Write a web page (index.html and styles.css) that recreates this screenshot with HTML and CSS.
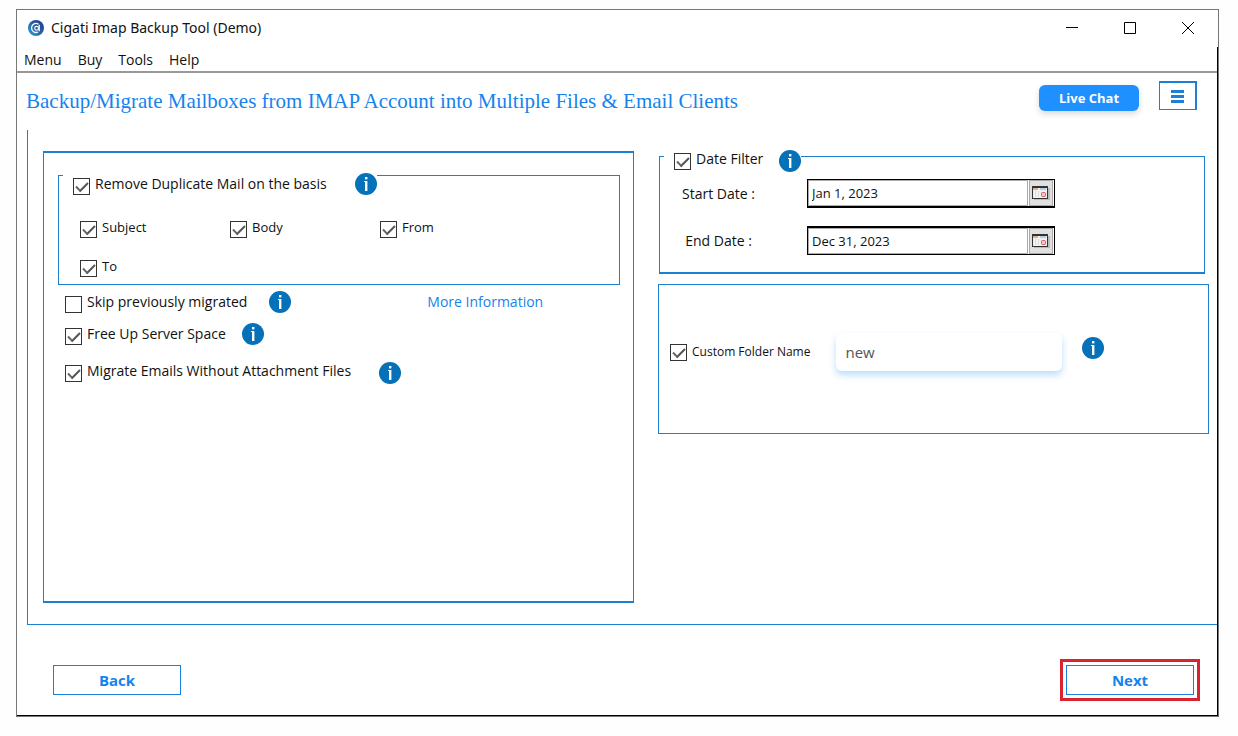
FILE: index.html
```html
<!DOCTYPE html>
<html lang="en">
<head>
    <meta charset="UTF-8">
    <meta name="viewport" content="width=device-width, initial-scale=1.0">
    <title>Cigati Imap Backup Tool (Demo)</title>
    <link rel="stylesheet" href="styles.css">
</head>
<body>
    <!-- Shared icons -->
    <svg class="sprite" aria-hidden="true">
        <symbol id="info" viewBox="0 0 22 22">
            <circle cx="11" cy="11" r="11" fill="#0571b8"/>
            <rect x="10" y="4" width="2.400" height="2.400" fill="#fff"/>
            <path d="M9 8h3.400v10H10V9H9z" fill="#fff"/>
        </symbol>
        <symbol id="calendar" viewBox="0 0 18 14">
            <rect x="2" y="2" width="16" height="12" fill="#bbb"/>
            <rect x="0" y="0" width="16" height="13" fill="#333"/>
            <rect x="1" y="2" width="14" height="10" fill="#f4f0f0"/>
            <rect x="1" y="2" width="5" height="2" fill="#d9b878"/>
            <rect x="8" y="2" width="6" height="2" fill="#b5cfe6"/>
            <path d="M3.500 5v6M6.500 5v6" stroke="#ddd"/>
            <rect x="9.500" y="6.500" width="4" height="4" rx="1" fill="#f5c9c9" stroke="#cf5c5c"/>
        </symbol>
    </svg>

    <div class="window">
        <div class="titlebar">
            <svg class="logo" viewBox="0 0 16 16" aria-hidden="true">
                <defs>
                    <linearGradient id="logo-fill" x1="0" y1="1" x2="1" y2="0">
                        <stop offset="0" stop-color="#2aa5d8"/>
                        <stop offset="0.6" stop-color="#26579f"/>
                        <stop offset="1" stop-color="#2b3580"/>
                    </linearGradient>
                </defs>
                <circle cx="8" cy="8" r="8" fill="url(#logo-fill)"/>
                <path d="M10.500 4.200A4.500 4.500 0 1 0 10 12" fill="none" stroke="#fff" stroke-width="1.300"/>
                <circle cx="8.600" cy="8.300" r="1.900" fill="none" stroke="#fff" stroke-width="1.100"/>
                <path d="M11.200 4.800v6.400" fill="none" stroke="#fff" stroke-width="1.300"/>
            </svg>
            <span class="app-name">Cigati Imap Backup Tool (Demo)</span>
            <div class="window-controls">
                <button type="button" aria-label="Minimize">
                    <svg viewBox="0 0 12 12"><path d="M0 5.500h12"/></svg>
                </button>
                <button type="button" aria-label="Maximize">
                    <svg viewBox="0 0 12 12"><path d="M.5.5h11v11H.5z"/></svg>
                </button>
                <button type="button" aria-label="Close">
                    <svg viewBox="0 0 12 12"><path d="M0 0l12 12M12 0L0 12"/></svg>
                </button>
            </div>
        </div>

        <div class="content">
            <nav class="menubar">
                <button type="button">Menu</button>
                <button type="button">Buy</button>
                <button type="button">Tools</button>
                <button type="button">Help</button>
            </nav>

            <header class="header">
                <h1>Backup/Migrate Mailboxes from IMAP Account into Multiple Files &amp; Email Clients</h1>
                <button type="button" class="live-chat">Live Chat</button>
                <button type="button" class="burger" aria-label="Options">
                    <svg viewBox="0 0 13 13"><path d="M0 1.500h13M0 6.500h13M0 11.500h13"/></svg>
                </button>
            </header>

            <main class="panel">
                <section class="mail-options">
                    <fieldset class="duplicates">
                        <legend>
                            <label class="check"><input type="checkbox" checked><span>Remove Duplicate Mail on the basis</span></label>
                            <svg class="info"><use href="#info"/></svg>
                        </legend>
                        <div class="basis">
                            <label class="check"><input type="checkbox" checked><span>Subject</span></label>
                            <label class="check"><input type="checkbox" checked><span>Body</span></label>
                            <label class="check"><input type="checkbox" checked><span>From</span></label>
                            <label class="check"><input type="checkbox" checked><span>To</span></label>
                        </div>
                    </fieldset>
                    <div class="option skip">
                        <label class="check"><input type="checkbox"><span>Skip previously migrated</span></label>
                        <svg class="info"><use href="#info"/></svg>
                        <a href="#" class="more">More Information</a>
                    </div>
                    <div class="option free">
                        <label class="check"><input type="checkbox" checked><span>Free Up Server Space</span></label>
                        <svg class="info"><use href="#info"/></svg>
                    </div>
                    <div class="option migrate">
                        <label class="check"><input type="checkbox" checked><span>Migrate Emails Without Attachment Files</span></label>
                        <svg class="info"><use href="#info"/></svg>
                    </div>
                </section>

                <section class="filters">
                    <fieldset class="dates">
                        <legend>
                            <label class="check"><input type="checkbox" checked><span>Date Filter</span></label>
                            <svg class="info"><use href="#info"/></svg>
                        </legend>
                        <div class="date-row">
                            <label for="start-date">Start Date :</label>
                            <div class="date-field start">
                                <input type="text" id="start-date" value="Jan 1, 2023">
                                <button type="button" aria-label="Pick start date"><svg><use href="#calendar"/></svg></button>
                            </div>
                        </div>
                        <div class="date-row">
                            <label for="end-date">End Date :</label>
                            <div class="date-field end">
                                <input type="text" id="end-date" value="Dec 31, 2023">
                                <button type="button" aria-label="Pick end date"><svg><use href="#calendar"/></svg></button>
                            </div>
                        </div>
                    </fieldset>

                    <div class="folder">
                        <label class="check"><input type="checkbox" checked><span>Custom Folder Name</span></label>
                        <input type="text" class="folder-name" value="new" aria-label="Custom folder name">
                        <svg class="info"><use href="#info"/></svg>
                    </div>
                </section>
            </main>

            <footer class="actions">
                <button type="button" class="btn">Back</button>
                <div class="highlight">
                    <button type="button" class="btn">Next</button>
                </div>
            </footer>
        </div>
    </div>
</body>
</html>
```
FILE: styles.css
```css
* {
    box-sizing: border-box;
}

body {
    display: flex;
    min-height: 100vh;
    margin: 0;
    padding: 9px 19px 19px 16px;
    background-color: #fefefe;
    color: #111;
    font-family: "Open Sans", "Noto Sans", sans-serif;
    font-size: 14px;
    line-height: 18px;
}

button, input {
    font-family: inherit;
    color: inherit;
}

button {
    padding: 0;
    border: none;
    background: none;
    cursor: pointer;
}

.sprite {
    position: absolute;
    width: 0;
    height: 0;
}

.window {
    display: flex;
    flex: 1;
    flex-direction: column;
    border: 1px solid #777;
    background-color: #fff;
}

/* Title bar */
.titlebar {
    display: flex;
    align-items: center;
    height: 37px;
    padding: 0 18px 1px 11px;
}

.logo {
    width: 16px;
    height: 16px;
    margin-right: 7px;
}

.app-name {
    flex: 1;
    font-family: "Noto Sans", sans-serif;
}

.window-controls {
    display: flex;
    gap: 34px;
}

.window-controls button {
    display: flex;
    align-items: center;
    justify-content: center;
    width: 24px;
    height: 24px;
}

.window-controls svg {
    width: 12px;
    height: 12px;
    fill: none;
    stroke: #000;
}

.content {
    display: flex;
    flex: 1;
    flex-direction: column;
    border-right: 1px solid #000;
    border-bottom: 1px solid #000;
}

.menubar {
    display: flex;
    gap: 16px;
    height: 26px;
    padding-left: 7px;
    border-bottom: 2px solid #999;
}

.menubar button {
    font-size: 14px;
}

/* Heading and top buttons */
.header {
    display: flex;
    align-items: center;
    height: 57px;
    padding: 0 20px 2px 9px;
}

.header h1 {
    flex: 1;
    margin: 0;
    color: #1583ee;
    font-family: "Liberation Serif", serif;
    font-size: 21px;
    font-weight: normal;
    line-height: 24px;
}

.live-chat {
    width: 100px;
    height: 26px;
    margin: 0 20px 6px 0;
    border-radius: 6px;
    background-color: #1e90ff;
    box-shadow: 0 3px 6px rgba(0, 0, 0, 0.15);
    color: #fff;
    font-size: 13px;
    font-weight: bold;
}

.burger {
    width: 38px;
    height: 29px;
    margin-bottom: 10px;
    border: 1px solid #1e7fd8;
    border-top-width: 2px;
    border-right-width: 2px;
}

.burger svg {
    display: block;
    width: 13px;
    height: 13px;
    margin: 0 auto;
    stroke: #1e7fd8;
    stroke-width: 3;
}

/* Main panel */
.panel {
    display: grid;
    flex: 1;
    grid-template-columns: 591fr 551fr;
    gap: 24px;
    margin-left: 10px;
    padding: 10px 8px 21px 15px;
    border-left: 1px solid #1a80cf;
    border-bottom: 1px solid #1a80cf;
}

fieldset {
    min-width: 0;
    margin: 0;
    padding: 0 0 0 4px;
    border: 1px solid #1a80cf;
}

legend {
    display: flex;
    align-items: center;
    padding: 0 0 0 10px;
}

.check {
    display: flex;
    align-items: center;
    gap: 5px;
}

.check span {
    margin-bottom: 4px;
}

.check input {
    display: grid;
    width: 17px;
    height: 17px;
    margin: 0;
    border: 1px solid #333;
    background-color: #fff;
    appearance: none;
    place-items: center;
}

.check input:checked::before {
    width: 10px;
    height: 5px;
    margin-bottom: 2px;
    border-left: 2px solid #666;
    border-bottom: 2px solid #555;
    content: "";
    transform: rotate(-45deg);
}

.info {
    flex: none;
    width: 22px;
    height: 22px;
}

.mail-options {
    margin-top: 11px;
    padding: 0 13px 0 14px;
    border: 1px solid #1a80cf;
    border-top-width: 2px;
    border-bottom-width: 2px;
}

.duplicates {
    margin-bottom: 4px;
}

.duplicates legend {
    padding-top: 18px;
}

.duplicates legend .check,
.skip .check,
.free .check {
    margin-top: 4px;
}

.duplicates .info {
    margin-left: 28px;
}

.basis {
    display: grid;
    grid-template-columns: repeat(3, 150px);
    row-gap: 17px;
    padding: 21px 0 5px 17px;
    font-size: 13px;
}

.option {
    display: flex;
    align-items: center;
    padding-left: 7px;
}

.skip .info {
    margin-left: 22px;
}

.free {
    margin-top: 6px;
}

.free .info {
    margin-left: 16px;
}

.migrate {
    margin-top: 15px;
}

.migrate .info {
    margin-left: 28px;
}

.more {
    margin-left: 136px;
    color: #1583ee;
    text-decoration: none;
}

.dates {
    margin: 0 4px 10px 1px;
    padding-bottom: 17px;
    border-bottom-width: 2px;
}

.dates legend {
    padding-top: 10px;
}

.dates .info {
    margin-left: 16px;
}

.date-row {
    display: flex;
    align-items: center;
    padding-left: 18px;
}

.date-row:first-of-type {
    margin: 7px 0 18px;
}

.date-row label {
    width: 73px;
    text-align: center;
    white-space: nowrap;
}

.date-field {
    display: flex;
    gap: 1px;
    width: 248px;
    height: 29px;
    margin-left: 52px;
    padding-right: 1px;
    border: 1px solid #000;
}

.date-field.start {
    border-bottom-width: 2px;
}

.date-field.end {
    border-top-width: 2px;
}

.date-field input {
    flex: 1;
    min-width: 0;
    padding: 0 3px;
    border: 1px solid #aaa;
    background-color: #fff;
    font-size: 13px;
}

.date-field button {
    width: 24px;
    border: 1px solid #aaa;
    background-color: #e0e0e0;
}

.date-field svg {
    display: block;
    width: 18px;
    height: 14px;
    margin: 0 auto;
}

.folder {
    display: flex;
    align-items: center;
    height: 150px;
    padding: 0 0 14px 11px;
    border: 1px solid #1a80cf;
}

.folder span {
    margin-bottom: 0;
    font-size: 12px;
}

.folder-name {
    width: 226px;
    height: 38px;
    margin: 0 20px 0 26px;
    padding: 0 9px;
    border: none;
    border-radius: 6px;
    background-color: #fff;
    box-shadow: 0 4px 7px rgba(30, 144, 255, 0.3);
    color: #555;
    font-size: 15px;
}

.folder .info {
    margin-bottom: 8px;
}

/* Bottom buttons */
.actions {
    display: flex;
    align-items: center;
    justify-content: space-between;
    height: 90px;
    padding: 20px 17px 0 36px;
}

.btn {
    display: block;
    width: 128px;
    height: 30px;
    border: 1px solid #1a80d8;
    color: #1583ee;
    font-size: 15px;
    font-weight: bold;
}

.highlight {
    padding: 3px;
    border: 3px solid #d9232e;
}
```
